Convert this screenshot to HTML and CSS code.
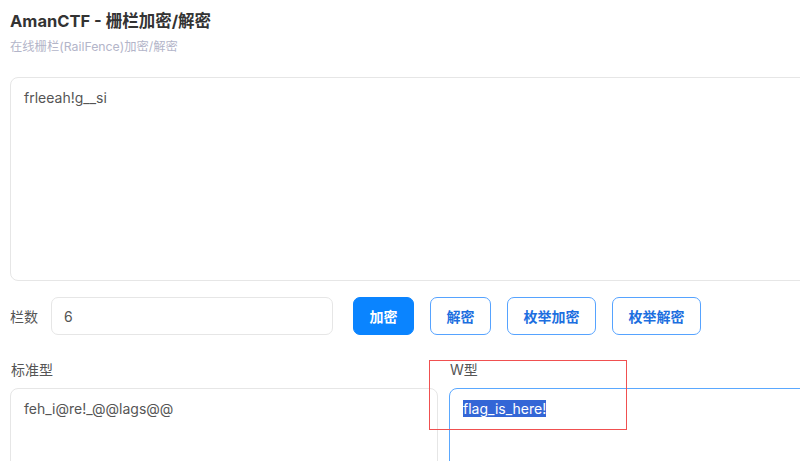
FILE: index.html
```html
<!DOCTYPE html>
<html lang="zh">
<head>
<meta charset="utf-8">
<link rel="stylesheet" href="styles.css">
</head>
<body>
<div class="page">
  <h1 class="title">AmanCTF - 栅栏加密/解密</h1>
  <p class="subtitle">在线栅栏(RailFence)加密/解密</p>
  <div class="box input-box">frleeah!g__si</div>
  <div class="controls">
    <label class="label">栏数</label>
    <div class="field">6</div>
    <div class="buttons">
      <button class="btn primary">加密</button>
      <button class="btn">解密</button>
      <button class="btn">枚举加密</button>
      <button class="btn">枚举解密</button>
    </div>
  </div>
  <div class="results">
    <div class="col">
      <div class="col-label">标准型</div>
      <div class="box out-box">feh_i@re!_@@lags@@</div>
    </div>
    <div class="col">
      <div class="col-label">W型</div>
      <div class="box out-box focused"><span class="sel">flag_is_here!</span></div>
    </div>
  </div>
</div>
<div class="mark"></div>
</body>
</html>
```

FILE: styles.css
```css
html, body {
  margin: 0;
  padding: 0;
  background: #fff;
  overflow: hidden;
  width: 800px;
  height: 461px;
}
body {
  font-family: Inter, "Noto Sans CJK SC", sans-serif;
  color: #333;
  position: relative;
}
.page {
  width: 867px;
  height: 461px;
  padding: 10px 0 0 10px;
  box-sizing: border-box;
  overflow: hidden;
}
.title {
  margin: 0;
  font-size: 16.5px;
  font-weight: 700;
  line-height: 22px;
  color: #333;
}
.subtitle {
  margin: 7px 0 0 0;
  font-size: 12.3px;
  line-height: 16px;
  color: #b3b5c9;
}
.box {
  box-sizing: border-box;
  border: 1px solid #e6e6e6;
  border-radius: 8px;
  font-size: 14px;
  color: #555;
  padding: 11px 13px;
  line-height: 18px;
}
.input-box {
  margin-top: 22px;
  height: 204px;
}
.controls {
  display: flex;
  align-items: center;
  margin-top: 16px;
  height: 38px;
}
.label {
  font-size: 14px;
  color: #555;
  width: 41px;
}
.field {
  box-sizing: border-box;
  width: 282px;
  height: 38px;
  border: 1px solid #e6e6e6;
  border-radius: 7px;
  padding: 0 12px;
  display: flex;
  align-items: center;
  font-size: 14px;
  color: #555;
}
.buttons {
  display: flex;
  gap: 16px;
  margin-left: 20px;
}
.btn {
  box-sizing: border-box;
  height: 38px;
  padding: 0 15.5px;
  border: 1px solid #56a3ff;
  border-radius: 7px;
  background: #fff;
  color: #1d6fe0;
  font-family: Inter, "Noto Sans CJK SC", sans-serif;
  font-size: 14px;
  font-weight: 700;
}
.btn.primary {
  background: #0a84ff;
  border-color: #0a84ff;
  color: #fff;
}
.results {
  display: grid;
  grid-template-columns: 428px 1fr;
  column-gap: 11px;
  margin-top: 26px;
}
.col-label {
  font-size: 14px;
  color: #555;
  line-height: 18px;
  padding-left: 1px;
}
.out-box {
  margin-top: 9px;
  height: 120px;
}
.focused {
  border-color: #5aa8ff;
}
.sel {
  background: #3366d6;
  color: #fff;
}
.mark {
  position: absolute;
  left: 429px;
  top: 360px;
  width: 198px;
  height: 70px;
  box-sizing: border-box;
  border: 1px solid #f05050;
}
```
